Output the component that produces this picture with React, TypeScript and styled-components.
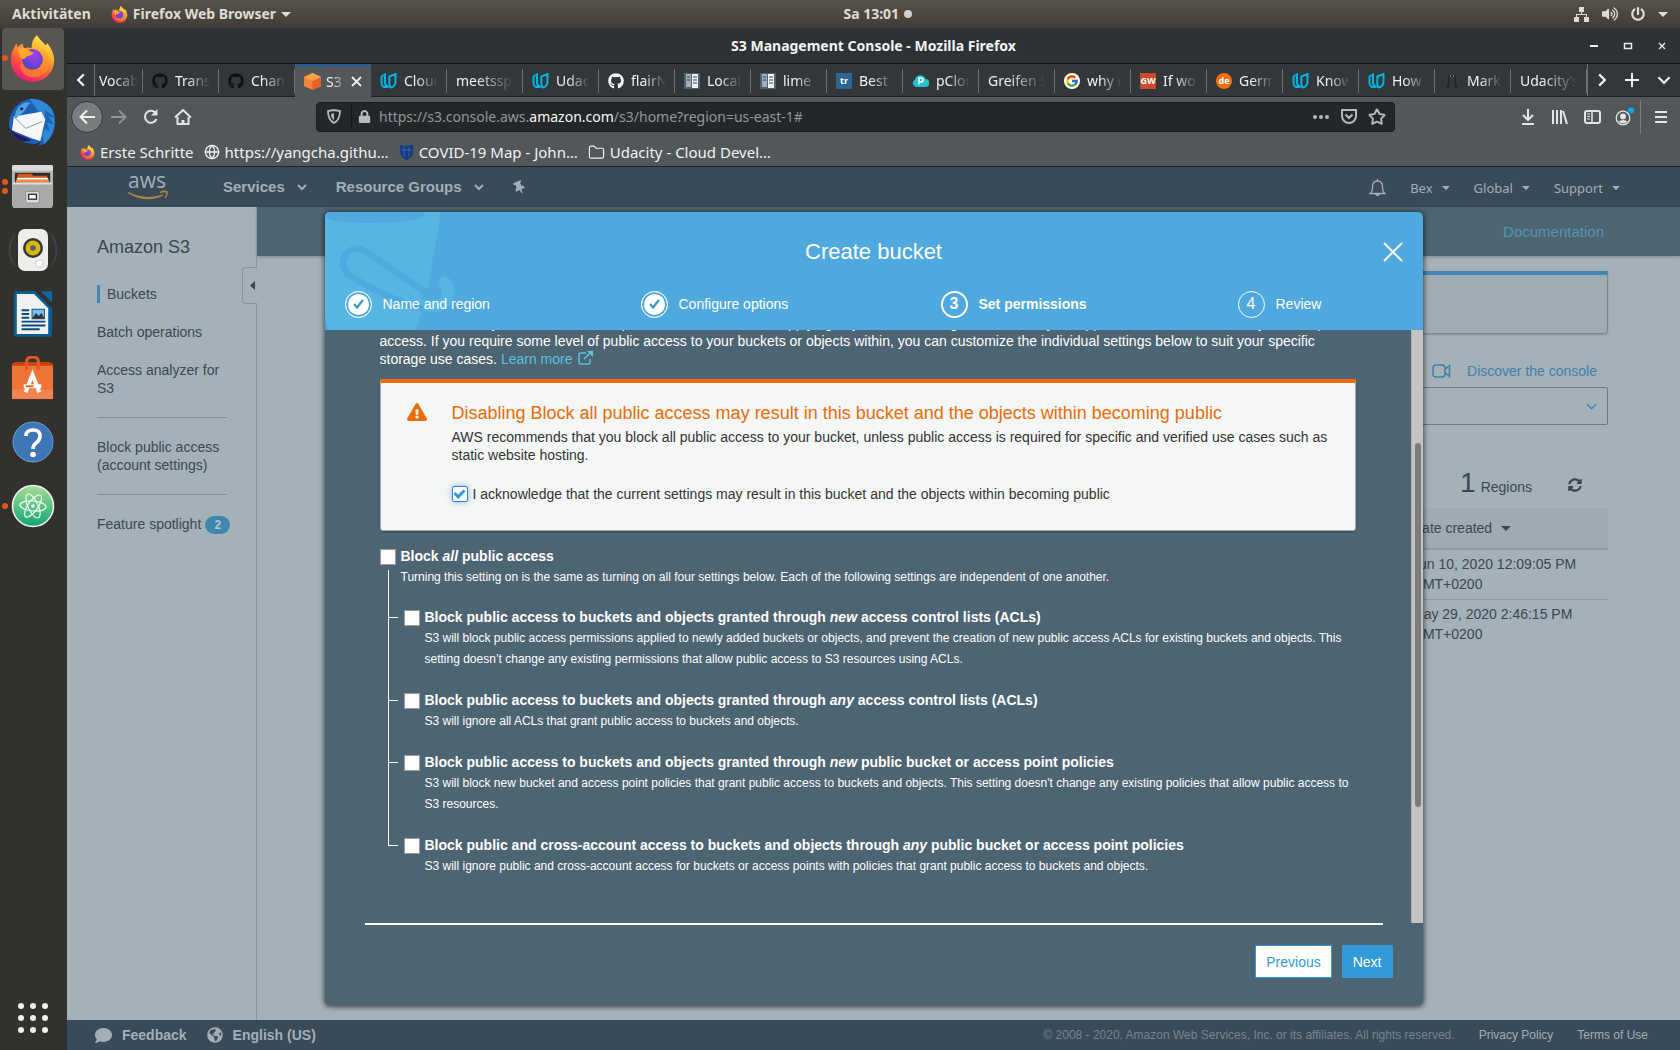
import React from "react";
import styled, { createGlobalStyle, css } from "styled-components";
import {
  FaGithub,
  FaThumbtack,
  FaComment,
  FaGlobeAmericas,
  FaExclamationTriangle,
  FaSyncAlt,
  FaVolumeUp,
  FaPowerOff,
  FaLock,
} from "react-icons/fa";
import { FcGoogle } from "react-icons/fc";
import { Globe, Star, Folder } from "lucide-react";

const ui = '"Noto Sans", "Open Sans", sans-serif';
const sans = '"Liberation Sans", Arial, sans-serif';

const Global = createGlobalStyle`
  * { box-sizing: border-box; }
  html, body, #root { height: 100%; }
  body { margin: 0; font-family: ${sans}; font-size: 14px; line-height: 18px; }
  button { font: inherit; color: inherit; background: none; border: 0; padding: 0; margin: 0; }
  h1, h2, h3, p, ul, ol { margin: 0; padding: 0; font-weight: normal; list-style: none; }
  a { text-decoration: none; color: inherit; }
  svg { display: block; flex: none; }
`;

/* ---------- Desktop ---------- */

const Desktop = styled.div`
  height: 100vh;
  display: flex;
  flex-direction: column;
  overflow: hidden;
`;

const TopBar = styled.header`
  flex: none;
  height: 28px;
  display: grid;
  grid-template-columns: 11fr auto 10fr;
  align-items: center;
  padding: 0 12px;
  background: linear-gradient(#57534a, #3f3d37);
  color: #dfdbd2;
  font: bold 14px/26px ${ui};
`;

const TopGroup = styled.div<{ $end?: boolean }>`
  display: flex;
  align-items: center;
  gap: ${(p) => (p.$end ? 13 : 20)}px;
  justify-content: ${(p) => (p.$end ? "flex-end" : "flex-start")};
`;

const TopButton = styled.button`
  display: flex;
  align-items: center;
  gap: 5px;
`;

const Caret = styled.span<{ $size?: number }>`
  width: 0;
  border: ${(p) => p.$size || 4}px solid transparent;
  border-top-color: currentColor;
  border-bottom: 0;
`;

const ClockDot = styled.span`
  width: 8px;
  height: 8px;
  border-radius: 50%;
  background: #d5d1c8;
`;

const Workspace = styled.div`
  flex: 1;
  min-height: 0;
  display: flex;
`;

const Dock = styled.nav`
  flex: none;
  width: 67px;
  display: flex;
  flex-direction: column;
  background: #33312d;
  padding-right: 2px;
`;

const DockItem = styled.button<{ $active?: boolean }>`
  position: relative;
  height: 64px;
  display: grid;
  place-items: center;
  padding-bottom: 4px;
  &::before {
    content: "";
    position: absolute;
    inset: 0 1px 2px 2px;
    border-radius: 4px;
    background: ${(p) => (p.$active ? "#585650" : "transparent")};
  }
  svg { position: relative; }
`;

const Pips = styled.span`
  position: absolute;
  left: 2px;
  top: 0;
  bottom: 4px;
  display: flex;
  flex-direction: column;
  justify-content: center;
  gap: 3px;
`;

const Pip = styled.i`
  width: 6px;
  height: 6px;
  border-radius: 50%;
  background: #e95420;
`;

const AppsButton = styled.button`
  margin: auto auto 17px;
  display: grid;
  grid-template-columns: repeat(3, 6px);
  gap: 6px;
  i { height: 6px; border-radius: 50%; background: #f2f1ef; }
`;

/* ---------- Browser chrome ---------- */

const Browser = styled.div`
  flex: 1;
  min-width: 0;
  display: flex;
  flex-direction: column;
`;

const TitleBar = styled.div`
  flex: none;
  height: 36px;
  display: grid;
  grid-template-columns: 1fr auto 1fr;
  align-items: center;
  padding: 0 12px;
  background: #2d3234;
  border-bottom: 1px solid #101213;
  color: #f2f3f3;
  font: bold 14px/20px ${ui};
`;

const WindowControls = styled.div`
  justify-self: end;
  display: flex;
  gap: 22px;
  color: #eee;
`;

const TabStrip = styled.div`
  flex: none;
  height: 33px;
  display: flex;
  background: #32373a;
  border-bottom: 1px solid #1d2021;
  color: #f0f1f1;
`;

const StripButton = styled.button<{ $w: number }>`
  width: ${(p) => p.$w}px;
  display: grid;
  place-items: center;
`;

const Tabs = styled.div`
  flex: 1;
  min-width: 0;
  display: flex;
  border: solid #6b7073;
  border-width: 0 1px;
`;

const Tab = styled.button<{ $active?: boolean; $cut?: boolean }>`
  flex: ${(p) => (p.$cut ? "0 0 48px" : "1 1 0")};
  min-width: 0;
  position: relative;
  display: flex;
  align-items: center;
  gap: ${(p) => (p.$active ? 5 : 7)}px;
  padding: 2px ${(p) => (p.$cut ? 4 : 9)}px 0 ${(p) => (p.$cut ? 4 : 9)}px;
  font: 14px/20px ${ui};
  text-align: left;
  &::after {
    content: "";
    position: absolute;
    right: 0;
    top: 5px;
    bottom: 3px;
    width: 1px;
    background: #6b7073;
  }
  ${(p) =>
    p.$active &&
    css`
      background: #525759;
      border-top: 2px solid #215d9c;
      padding-top: 0;
      height: 33px;
      &::after { display: none; }
    `}
`;

const TabLabel = styled.span`
  flex: 1;
  min-width: 0;
  overflow: hidden;
  white-space: nowrap;
  mask-image: linear-gradient(to right, #000 35%, transparent 100%);
`;

const Square = styled.span<{ $bg: string; $round?: boolean }>`
  flex: none;
  width: 16px;
  height: 16px;
  display: grid;
  place-items: center;
  border-radius: ${(p) => (p.$round ? "50%" : "0")};
  background: ${(p) => p.$bg};
  color: #fff;
  font: bold 9px/16px ${ui};
`;

const Toolbar = styled.div`
  flex: none;
  height: 41px;
  display: flex;
  align-items: center;
  padding: 0 11px 2px 4px;
  background: #525759;
  color: #e3e4e4;
`;

const ToolButton = styled.button<{ $round?: boolean; $dim?: boolean }>`
  width: 32px;
  height: 32px;
  display: grid;
  place-items: center;
  color: ${(p) => (p.$dim ? "#8f9394" : "inherit")};
  ${(p) =>
    p.$round &&
    css`
      border-radius: 50%;
      background: #787c7d;
      border: 1px solid #34383a;
    `}
`;

const UrlBox = styled.div`
  flex: 1;
  margin: 0 117px;
  height: 30px;
  display: flex;
  align-items: center;
  gap: 6px;
  padding: 0 6px;
  border: 1px solid #1b1e20;
  border-radius: 4px;
  background: #232729;
  color: #b6b8b9;
`;

const UrlText = styled.a`
  flex: 1;
  font: 14px/20px ${ui};
  color: #939698;
  padding-left: 2px;
  b { font-weight: normal; color: #f5f5f5; }
`;

const UrlButton = styled.button`
  width: 22px;
  display: grid;
  place-items: center;
`;

const Rule = styled.span<{ $h: number; $c: string }>`
  flex: none;
  width: 1px;
  height: ${(p) => p.$h}px;
  background: ${(p) => p.$c};
`;

const Bookmarks = styled.nav`
  flex: none;
  height: 29px;
  display: flex;
  align-items: center;
  gap: 10px;
  padding: 0 13px;
  background: #525759;
  border-bottom: 1px solid #1f2325;
  color: #f0f1f1;
  font: 15px/20px ${ui};
`;

const Bookmark = styled.a`
  display: flex;
  align-items: center;
  gap: 5px;
`;

/* ---------- AWS console ---------- */

const Page = styled.div`
  flex: 1;
  min-height: 0;
  position: relative;
  display: flex;
  flex-direction: column;
  background: #a4b1b9;
  color: #3b474f;
`;

const ConsoleBar = styled.header`
  flex: none;
  height: 40px;
  display: flex;
  align-items: center;
  padding: 0 60px;
  background: #394a59;
  color: #a3afb7;
  font-weight: bold;
  font-size: 15px;
`;

const Logo = styled.a`
  margin-right: 54px;
`;

const ConsoleItem = styled.button`
  display: flex;
  align-items: center;
  gap: 12px;
  margin-right: 29px;
`;

const Pin = styled.span`
  display: block;
  transform: rotate(-25deg);
`;

const AccountMenus = styled.div`
  margin-left: auto;
  display: flex;
  align-items: center;
  gap: 24px;
  padding-top: 2px;
  font: 13px/18px ${ui};
`;

const AccountItem = styled.button`
  display: flex;
  align-items: center;
  gap: 9px;
`;

const Console = styled.div`
  flex: 1;
  min-height: 0;
  display: flex;
`;

const Sidebar = styled.aside`
  position: relative;
  flex: none;
  width: 190px;
  padding: 29px 29px 0 30px;
  border-right: 1px solid #88959d;
`;

const SideTitle = styled.h2`
  font-size: 18px;
  line-height: 22px;
  margin-bottom: 27px;
`;

const SideList = styled.ul`
  display: flex;
  flex-direction: column;
  gap: 20px;
`;

const SideLink = styled.a<{ $current?: boolean }>`
  display: block;
  white-space: nowrap;
  ${(p) => p.$current && "border-left: 3px solid #3f86b0; padding-left: 7px;"}
`;

const SideRule = styled.li`
  height: 1px;
  background: #83909a;
`;

const Badge = styled.span`
  display: inline-block;
  width: 25px;
  margin-left: 4px;
  border-radius: 9px;
  background: #3f86b0;
  color: #b9c6ce;
  font-size: 12px;
  font-weight: bold;
  text-align: center;
`;

const Collapse = styled.button`
  position: absolute;
  right: -1px;
  top: 60px;
  width: 15px;
  height: 37px;
  display: grid;
  place-items: center end;
  padding-right: 2px;
  border: 1px solid #88959d;
  border-right: 0;
  border-radius: 4px 0 0 4px;
  background: #a4b1b9;
`;

const Main = styled.main`
  flex: 1;
  min-width: 0;
`;

const Band = styled.div`
  height: 49px;
  display: flex;
  align-items: center;
  justify-content: flex-end;
  padding: 0 76px;
  background: #4d6472;
  color: #5896b0;
  font-size: 15px;
  box-shadow: 0 1px 3px #00000040;
`;

const MainBody = styled.div`
  padding: 15px 72px 0;
`;

const InfoCard = styled.section`
  height: 63px;
  border: 1px solid #7b8890;
  border-top: 4px solid #3f86b0;
  border-radius: 0 0 4px 4px;
  background: #a0acb3;
  box-shadow: 0 1px 2px #00000030;
`;

const Discover = styled.a`
  display: flex;
  align-items: center;
  justify-content: flex-end;
  gap: 16px;
  margin: 28px 11px 7px;
  color: #3f81a8;
`;

const SearchRow = styled.button`
  width: 100%;
  height: 38px;
  display: flex;
  align-items: center;
  justify-content: flex-end;
  padding: 0 10px;
  border: 1px solid #6c7a83;
  border-radius: 2px;
  color: #3f81a8;
`;

const Summary = styled.div`
  height: 83px;
  display: flex;
  align-items: baseline;
  justify-content: flex-end;
  gap: 5px;
  padding: 43px 26px 0;
`;

const Count = styled.strong`
  font-weight: normal;
  font-size: 28px;
  line-height: 30px;
`;

const Refresh = styled.button`
  margin-left: 31px;
`;

const BucketTable = styled.table`
  width: 100%;
  table-layout: fixed;
  border-collapse: collapse;
  line-height: 20px;
  text-align: left;
  th { height: 41px; font-weight: normal; padding: 0; background: #9fabb2; border-bottom: 2px solid #8b989f; }
  td { padding: 4px 0 5px; vertical-align: top; border-bottom: 1px solid #8b989f; }
  tr:last-child td { border-bottom: 0; }
  th:last-child { width: 196px; }
`;

const SortLabel = styled.span`
  display: flex;
  align-items: center;
  gap: 9px;
`;

const Footer = styled.footer`
  flex: none;
  height: 30px;
  display: flex;
  align-items: center;
  padding: 0 32px 0 28px;
  background: #394a59;
  color: #a3afb7;
`;

const FooterItem = styled.button`
  display: flex;
  align-items: center;
  gap: 10px;
  margin-right: 20px;
  font-weight: bold;
`;

const Legal = styled.div`
  margin-left: auto;
  display: flex;
  gap: 24px;
  font-size: 12px;
  span { color: #778690; }
`;

/* ---------- Dialog ---------- */

const Overlay = styled.div`
  position: absolute;
  inset: 0;
  display: flex;
  justify-content: center;
  padding: 45px 24px;
`;

const Dialog = styled.section`
  width: 100%;
  max-width: 1098px;
  display: flex;
  flex-direction: column;
  border-radius: 5px;
  overflow: hidden;
  background: #4d6472;
  color: #fff;
  box-shadow: 0 1px 5px 1px #0009;
`;

const DialogHead = styled.header`
  position: relative;
  flex: none;
  padding: 26px 20px 12px;
  background: #4fa9de;
`;

const BucketArt = styled.svg`
  position: absolute;
  left: 0;
  top: 0;
`;

const TitleRow = styled.div`
  position: relative;
  display: grid;
  grid-template-columns: 1fr auto 1fr;
  align-items: center;
  height: 28px;
  margin-bottom: 24px;
`;

const DialogTitle = styled.h1`
  grid-column: 2;
  font-size: 22px;
  line-height: 28px;
`;

const Close = styled.button`
  justify-self: end;
`;

const Steps = styled.ol`
  position: relative;
  display: grid;
  grid-template-columns: 296fr 300fr 297fr 165fr;
`;

const Step = styled.li<{ $current?: boolean }>`
  display: flex;
  align-items: center;
  gap: 11px;
  height: 28px;
  font-weight: ${(p) => (p.$current ? "bold" : "normal")};
`;

const Bullet = styled.span<{ $state: "done" | "current" | "next" }>`
  width: 27px;
  height: 27px;
  display: grid;
  place-items: center;
  border: ${(p) => (p.$state === "current" ? 2 : 1)}px solid #fff;
  border-radius: 50%;
  font-size: 16px;
  ${(p) => p.$state === "done" && "background: #fff; box-shadow: inset 0 0 0 2px #4fa9de;"}
`;

const Pane = styled.div`
  flex: 1;
  min-height: 0;
  display: flex;
`;

const Content = styled.div`
  flex: 1;
  display: flex;
  flex-direction: column;
  justify-content: flex-end;
  overflow: hidden;
  padding: 0 55px 46px;
`;

const Track = styled.div`
  flex: none;
  width: 12px;
  padding: 113px 3px 0;
  background: #c3c4c3;
  border-left: 1px solid #b0b2b1;
`;

const Thumb = styled.div`
  height: 364px;
  width: 6px;
  border-radius: 3px;
  background: #7b7d7c;
`;

const LearnMore = styled.a`
  color: #56c3e0;
  svg { display: inline-block; vertical-align: -1px; margin-left: 2px; }
`;

const Alert = styled.section`
  display: flex;
  gap: 25px;
  margin: 11px 0 15px;
  padding: 19px 24px 27px 26px;
  border: 1px solid #a9adac;
  border-top: 4px solid #eb6b07;
  border-radius: 0 0 3px 3px;
  background: #f5f7f6;
  color: #333;
  box-shadow: 0 1px 2px #0004;
`;

const AlertIcon = styled.span`
  color: #eb6b07;
`;

const AlertTitle = styled.h3`
  margin-bottom: 4px;
  color: #eb6b07;
  font-size: 18px;
  line-height: 22px;
`;

const CheckLabel = styled.label<{ $strong?: boolean }>`
  display: flex;
  align-items: center;
  gap: 5px;
  line-height: ${(p) => (p.$strong ? 21 : 18)}px;
  font-weight: ${(p) => (p.$strong ? "bold" : "normal")};
`;

const AckRow = styled.div`
  margin-top: 21px;
`;

const Box = styled.input`
  appearance: none;
  flex: none;
  width: 16px;
  height: 16px;
  margin: 0;
  display: grid;
  place-items: center;
  border: 1px solid #989b9b;
  background: #fff;
  &:checked {
    border-color: #2f83dc;
    border-radius: 2px;
    box-shadow: 0 0 6px #2f83dc90;
  }
  &:checked::before {
    content: "";
    width: 12px;
    height: 12px;
    background: #2e97d8;
    clip-path: polygon(0 52%, 16% 34%, 38% 56%, 84% 12%, 100% 28%, 40% 92%);
  }
`;

const Note = styled.p`
  padding-left: 21px;
  font-size: 12px;
  line-height: 21px;
`;

const Tree = styled.ul`
  margin: 19px 0 0 24px;
  display: flex;
  flex-direction: column;
  gap: 20px;
`;

const Branch = styled.li`
  position: relative;
  &::before {
    content: "";
    position: absolute;
    left: -16px;
    top: 0;
    bottom: -20px;
    border-left: 1px solid #fff;
  }
  &::after {
    content: "";
    position: absolute;
    left: -16px;
    top: 10px;
    width: 10px;
    border-top: 1px solid #fff;
  }
  &:first-child::before { top: -37px; }
  &:last-child::before { bottom: auto; height: 11px; }
`;

const DialogFoot = styled.footer`
  flex: none;
  hr { height: 2px; margin: 0 40px; border: 0; background: #fff; }
`;

const Actions = styled.div`
  display: flex;
  justify-content: flex-end;
  gap: 10px;
  padding: 20px 30px 27px;
`;

const Action = styled.button<{ $primary?: boolean }>`
  height: 33px;
  padding: 0 10px;
  border: 1px solid #329ad9;
  background: ${(p) => (p.$primary ? "#329ad9" : "#fff")};
  color: ${(p) => (p.$primary ? "#fff" : "#329ad9")};
`;

/* ---------- Drawings ---------- */

const Chevron = ({ d = "down", s = 10, w = 2 }: { d?: "down" | "left" | "right"; s?: number; w?: number }) => (
  <svg width={s} height={s} viewBox="0 0 10 10" fill="none" stroke="currentColor" strokeWidth={w}>
    <path d={{ down: "M1 3l4 4 4-4", left: "M7 1L3 5l4 4", right: "M3 1l4 4-4 4" }[d]} />
  </svg>
);

const FirefoxIcon = ({ s }: { s: number }) => {
  const id = "fx" + s;
  return (
    <svg width={s} height={s} viewBox="0 0 46 50">
      <defs>
        <linearGradient id={id} x1=".8" y1="0" x2=".3" y2="1">
          <stop offset="0" stopColor="#fff44f" />
          <stop offset=".35" stopColor="#ffb02e" />
          <stop offset=".65" stopColor="#ff5a36" />
          <stop offset="1" stopColor="#e5157a" />
        </linearGradient>
        <radialGradient id={id + "p"} cx=".6" cy=".3" r=".8">
          <stop offset="0" stopColor="#a03ff5" />
          <stop offset="1" stopColor="#4a46b8" />
        </radialGradient>
      </defs>
      <path d="M28 0c2 5 6 7 9 11 2-1 1-3 1-3 5 6 8 12 8 19a23 23 0 0 1-46 0C0 19 3 13 6 9l1 4 5-4 2 5c3-1 6-1 8 0 0-6 2-11 6-14z" fill={`url(#${id})`} />
      <circle cx="23" cy="26" r="11" fill={`url(#${id}p)`} />
      <path d="M7 15c5-3 10-1 13 2l4 2c-1 3-6 3-8 5-1 2-4 2-6 0z" fill="#ffa62b" />
      <path d="M27 16c6 0 9 5 8 10-1 6-5 11-13 11-6 0-10-4-11-9-3 9 3 17 13 17 11 0 18-8 17-18-1-8-7-13-14-11z" fill="#ff9a2c" opacity=".55" />
    </svg>
  );
};

const Thunderbird = () => (
  <svg width="49" height="49" viewBox="0 0 50 50">
    <path d="M12 5C20-2 38 0 45 12c6 12 3 27-8 35l-6 2 3-5-6 3C12 46 2 40 1 27 1 18 5 10 12 5z" fill="#1c5fb8" />
    <path d="M22 1c10-1 20 5 24 13 4 12 0 25-9 33l-2-9 3-8-5-14z" fill="#2d8ad6" />
    <path d="M38 12l10 8-7-1 6 8-7-2 3 9-6-3" fill="#1b64b8" />
    <path d="M6 19l28-5 4 8-5 22-9-3-20-8z" fill="#f4f5f7" />
    <path d="M6 19l12 12 17-7" fill="none" stroke="#8d97a4" strokeWidth="1" />
    <path d="M7 20c0-10 8-18 17-15-5 1-4 6-9 10l-7 6z" fill="#4fa3e0" />
    <circle cx="14" cy="11" r="1.6" fill="#123" />
    <path d="M2 31c3 4 8 6 13 8l9 4c-8 4-19-1-22-12z" fill="#261a5c" />
  </svg>
);

const FilesIcon = () => (
  <svg width="43" height="45" viewBox="0 0 44 46">
    <rect x="1" y="1" width="42" height="43" rx="2" fill="#b5b5b5" />
    <rect x="1" y="1" width="42" height="6" rx="2" fill="#dcdcdc" />
    <rect x="4" y="9" width="36" height="12" fill="#2b2b2b" />
    <path d="M7 10h14l2 2h14v6H6z" fill="#d5571d" />
    <path d="M6 14h32v2H6z" fill="#fff" />
    <path d="M5 16h34v4H5z" fill="#f0883a" />
    <rect x="2" y="19" width="40" height="26" rx="1" fill="#a9a9a9" />
    <rect x="2" y="19" width="40" height="2" fill="#dedede" />
    <rect x="15" y="28" width="14" height="12" rx="2" fill="#dcdcdc" stroke="#8c8c8c" />
    <rect x="18" y="31" width="8" height="5" fill="#fff" stroke="#333" strokeWidth="1.4" />
  </svg>
);

const SpeakerIcon = () => (
  <svg width="50" height="46" viewBox="0 0 50 46">
    <g fill="none" stroke="#3c4a5c" strokeWidth="1.2">
      <path d="M7 7C0 17 0 29 7 39M43 7c7 10 7 22 0 32" />
      <path d="M4 11c-4 8-4 16 0 24M46 11c4 8 4 16 0 24" opacity=".6" />
    </g>
    <rect x="10" y="2" width="30" height="42" rx="7" fill="#ededeb" />
    <circle cx="25" cy="21" r="10" fill="#33373b" />
    <circle cx="25" cy="21" r="7.5" fill="#d9b60c" />
    <circle cx="25" cy="21" r="2.8" fill="#5b5f63" />
    <rect x="28" y="33" width="7" height="7" rx="2" fill="#fff" stroke="#cfcfcf" />
  </svg>
);

const WriterIcon = () => (
  <svg width="40" height="48" viewBox="0 0 42 50">
    <path d="M3 1h20l18 18v27a3 3 0 0 1-3 3H4a3 3 0 0 1-3-3V3a2 2 0 0 1 2-2z" fill="#0a5d92" />
    <path d="M4 4h18l15 15v27H4z" fill="#f1f1f1" />
    <path d="M29 1h11a1 1 0 0 1 1 1v11z" fill="#0a69a3" />
    <path d="M9 20h8v2H9zM9 24h8v2H9zM9 28h8v2H9zM9 32h25v2H9zM9 36h25v2H9zM9 40h19v2H9z" fill="#0a4d7c" />
    <rect x="20" y="20" width="13" height="10" fill="#78bfe8" stroke="#0a4d7c" />
    <path d="M20 30l4-6 3 3 3-3 3 6z" fill="#333" />
  </svg>
);

const StoreIcon = () => (
  <svg width="43" height="45" viewBox="0 0 44 46">
    <path d="M1 8l4-2h34l4 2v5H1z" fill="#c9430e" />
    <rect x="1" y="10" width="42" height="34" fill="#ee7437" />
    <rect x="1" y="34" width="42" height="10" fill="#f2854f" />
    <path d="M16 14V6q0-5 6-5t6 5v8" fill="none" stroke="#e25a22" strokeWidth="3" />
    <path d="M15 37l7-18 7 18M13 31h18" fill="none" stroke="#fff" strokeWidth="4" />
    <path d="M15 31h8" stroke="#e8622a" strokeWidth="2" />
  </svg>
);

const HelpIcon = () => (
  <svg width="42" height="42" viewBox="0 0 42 42">
    <circle cx="21" cy="21" r="20" fill="#3c76b4" stroke="#6f9fd2" />
    <path d="M14 15q0-6 7-6t7 6q0 4-4 7-3 2-3 6" fill="none" stroke="#fff" strokeWidth="3.6" />
    <circle cx="21" cy="33.5" r="2.8" fill="#fff" />
  </svg>
);

const AtomIcon = () => (
  <svg width="44" height="44" viewBox="0 0 44 44">
    <defs>
      <linearGradient id="atom" x1="0" y1="0" x2="0" y2="1">
        <stop offset="0" stopColor="#a5de94" />
        <stop offset="1" stopColor="#12a673" />
      </linearGradient>
    </defs>
    <circle cx="22" cy="22" r="20.5" fill="url(#atom)" stroke="#f2f4f2" strokeWidth="1.5" />
    <g fill="none" stroke="#f4fff4" strokeWidth="1.2">
      <ellipse cx="22" cy="22" rx="13" ry="5" transform="rotate(5 22 22)" />
      <ellipse cx="22" cy="22" rx="13" ry="5" transform="rotate(65 22 22)" />
      <ellipse cx="22" cy="22" rx="13" ry="5" transform="rotate(125 22 22)" />
    </g>
    <circle cx="22" cy="22" r="1.8" fill="#fff" />
  </svg>
);

const UdacityIcon = () => (
  <svg width="17" height="16" viewBox="0 0 17 16" fill="none" stroke="#02b3e4" strokeWidth="2">
    <path d="M1.500 3.500L5 1.500v8q0 3 2.800 4.200Q1.500 15.500 1.500 9.500z" />
    <path d="M9.300 3.500L15.500 1v7.500q0 5-4.700 6-1.500-.8-1.500-3.500z" />
  </svg>
);

const CubeIcon = () => (
  <svg width="17" height="17" viewBox="0 0 17 17">
    <path d="M8.500 0L17 4v9l-8.500 4L0 13V4z" fill="#f58536" />
    <path d="M8.500 0L17 4 8.500 8 0 4z" fill="#f9a14a" />
    <path d="M8.500 8L17 4v9l-8.500 4z" fill="#e8602b" />
  </svg>
);

const ServerIcon = () => (
  <svg width="16" height="16" viewBox="0 0 16 16">
    <rect width="16" height="16" fill="#51626f" />
    <rect x="2" y="1" width="5" height="13" fill="#9fb0bc" />
    <rect x="8" y="1" width="6" height="14" fill="#f0f3f5" />
    <path d="M9 4h4M9 7h4M9 10h4M3 4h3M3 7h3" stroke="#333f48" />
  </svg>
);

const CloudIcon = () => (
  <svg width="17" height="16" viewBox="0 0 17 16">
    <path d="M4 14a4 4 0 0 1-1-7.500A5.500 5.500 0 0 1 13.600 6 4 4 0 0 1 13 14z" fill="#20c3cf" />
    <path d="M7 11.500V5h2a2 2 0 0 1 0 4H7" fill="none" stroke="#fff" strokeWidth="1.500" />
  </svg>
);

const FigureIcon = () => (
  <svg width="16" height="16" viewBox="0 0 16 16" fill="none" stroke="#24282a" strokeWidth="2">
    <path d="M5 3h6v5l1 6h2M5 3v5l-1 6H2" />
    <path d="M6 3h1M9 3h1" stroke="#ddd" strokeWidth="1" />
  </svg>
);

const github = (c: string) => <FaGithub size={16} color={c} />;

const tabs: { label: string; icon?: React.ReactNode; active?: boolean; cut?: boolean }[] = [
  { label: "Vocab", cut: true },
  { label: "Transf", icon: github("#14100f") },
  { label: "Chang", icon: github("#14100f") },
  { label: "S3", icon: <CubeIcon />, active: true },
  { label: "Cloud", icon: <UdacityIcon /> },
  { label: "meetsspa" },
  { label: "Udaci", icon: <UdacityIcon /> },
  { label: "flairNL", icon: github("#fff") },
  { label: "Local", icon: <ServerIcon /> },
  { label: "lime", icon: <ServerIcon /> },
  { label: "Best", icon: <Square $bg="#2d6590">tr</Square> },
  { label: "pCloud", icon: <CloudIcon /> },
  { label: "Greifen S" },
  { label: "why n", icon: <Square $bg="#fff" $round><FcGoogle size={14} /></Square> },
  { label: "If wo", icon: <Square $bg="#ca4a2c">GW</Square> },
  { label: "Germ", icon: <Square $bg="#f96e05" $round>de</Square> },
  { label: "Know", icon: <UdacityIcon /> },
  { label: "How", icon: <UdacityIcon /> },
  { label: "Mark", icon: <FigureIcon /> },
  { label: "Udacity’s" },
];

const dock = [
  { name: "Firefox", icon: <FirefoxIcon s={47} />, pips: 1, active: true },
  { name: "Thunderbird", icon: <Thunderbird />, pips: 0 },
  { name: "Files", icon: <FilesIcon />, pips: 2 },
  { name: "Rhythmbox", icon: <SpeakerIcon />, pips: 0 },
  { name: "Writer", icon: <WriterIcon />, pips: 0 },
  { name: "Software", icon: <StoreIcon />, pips: 0 },
  { name: "Help", icon: <HelpIcon />, pips: 0 },
  { name: "Atom", icon: <AtomIcon />, pips: 1 },
];

const settings = [
  {
    id: "new-acl",
    title: <>Block public access to buckets and objects granted through <em>new</em> access control lists (ACLs)</>,
    note: "S3 will block public access permissions applied to newly added buckets or objects, and prevent the creation of new public access ACLs for existing buckets and objects. This setting doesn’t change any existing permissions that allow public access to S3 resources using ACLs.",
  },
  {
    id: "any-acl",
    title: <>Block public access to buckets and objects granted through <em>any</em> access control lists (ACLs)</>,
    note: "S3 will ignore all ACLs that grant public access to buckets and objects.",
  },
  {
    id: "new-policy",
    title: <>Block public access to buckets and objects granted through <em>new</em> public bucket or access point policies</>,
    note: "S3 will block new bucket and access point policies that grant public access to buckets and objects. This setting doesn't change any existing policies that allow public access to S3 resources.",
  },
  {
    id: "any-policy",
    title: <>Block public and cross-account access to buckets and objects through <em>any</em> public bucket or access point policies</>,
    note: "S3 will ignore public and cross-account access for buckets or access points with policies that grant public access to buckets and objects.",
  },
];

const steps: { label: string; state: "done" | "current" | "next" }[] = [
  { label: "Name and region", state: "done" },
  { label: "Configure options", state: "done" },
  { label: "Set permissions", state: "current" },
  { label: "Review", state: "next" },
];

/* ---------- Sections ---------- */

const DesktopBar = () => (
  <TopBar>
    <TopGroup>
      <TopButton>Aktivitäten</TopButton>
      <TopButton>
        <FirefoxIcon s={17} />
        Firefox Web Browser
        <Caret $size={5} />
      </TopButton>
    </TopGroup>
    <TopButton>
      Sa 13:01
      <ClockDot />
    </TopButton>
    <TopGroup $end>
      <svg width="15" height="15" viewBox="0 0 15 15" fill="#dfdbd2">
        <path d="M5 0h5v5H8v2h5v3h2v5h-5v-5h2V8H3v2h2v5H0v-5h2V7h5V5H5z" />
      </svg>
      <FaVolumeUp size={16} />
      <FaPowerOff size={14} />
      <Caret $size={5} />
    </TopGroup>
  </TopBar>
);

const Chrome = () => (
  <>
    <TitleBar>
      <span />
      <span>S3 Management Console - Mozilla Firefox</span>
      <WindowControls>
        <button aria-label="Minimise"><svg width="12" height="10" viewBox="0 0 12 10"><path d="M2 5h8" stroke="currentColor" strokeWidth="2" /></svg></button>
        <button aria-label="Maximise"><svg width="12" height="10" viewBox="0 0 12 10"><path d="M2.500 2.500h7v5h-7z" fill="none" stroke="currentColor" strokeWidth="1.500" /></svg></button>
        <button aria-label="Close window"><svg width="12" height="10" viewBox="0 0 12 10"><path d="M3 2l6 6M9 2L3 8" stroke="currentColor" strokeWidth="1.300" /></svg></button>
      </WindowControls>
    </TitleBar>
    <TabStrip>
      <StripButton $w={27} aria-label="Scroll tabs left"><Chevron d="left" s={14} w={1.6} /></StripButton>
      <Tabs>
        {tabs.map((t, i) => (
          <Tab key={i} $active={t.active} $cut={t.cut}>
            {t.icon}
            <TabLabel>{t.label}</TabLabel>
            {t.active && (
              <svg width="11" height="11" viewBox="0 0 11 11"><path d="M1 1l9 9M10 1l-9 9" stroke="#eee" strokeWidth="1.800" /></svg>
            )}
          </Tab>
        ))}
      </Tabs>
      <StripButton $w={28} aria-label="Scroll tabs right"><Chevron d="right" s={14} w={1.6} /></StripButton>
      <StripButton $w={32} aria-label="New tab"><svg width="14" height="14" viewBox="0 0 14 14"><path d="M7 0v14M0 7h14" stroke="currentColor" strokeWidth="2" /></svg></StripButton>
      <StripButton $w={32} aria-label="List all tabs"><Chevron s={14} w={1.6} /></StripButton>
    </TabStrip>
    <Toolbar>
      <ToolButton $round aria-label="Back"><svg width="16" height="16" viewBox="0 0 16 16" fill="none" stroke="#eee" strokeWidth="2"><path d="M16 8H1.500M8 1.500L1.500 8 8 14.500" /></svg></ToolButton>
      <ToolButton $dim aria-label="Forward"><svg width="16" height="16" viewBox="0 0 16 16" fill="none" stroke="currentColor" strokeWidth="2"><path d="M0 8h14.500M8 1.500L14.500 8 8 14.500" /></svg></ToolButton>
      <ToolButton aria-label="Reload"><svg width="16" height="16" viewBox="0 0 16 16" fill="none" stroke="currentColor" strokeWidth="2"><path d="M13 4.500A6 6 0 1 0 13.500 10" /><path d="M14.500 0v6.500H8z" fill="currentColor" stroke="none" /></svg></ToolButton>
      <ToolButton aria-label="Home"><svg width="18" height="16" viewBox="0 0 18 16" fill="none" stroke="currentColor" strokeWidth="2"><path d="M1 8.500L9 1l8 7.500M3.500 8v7h11V8" /><path d="M9 15v-4" strokeWidth="3" /></svg></ToolButton>
      <UrlBox>
        <UrlButton aria-label="Tracking protection"><svg width="14" height="15" viewBox="0 0 14 15" fill="none" stroke="currentColor" strokeWidth="1.800"><path d="M1 2l6-1 6 1q0 9-6 12Q1 11 1 2z" /><path d="M7 4v7q-3-2-3-6z" fill="currentColor" stroke="none" /></svg></UrlButton>
        <Rule $h={24} $c="#15181a" />
        <FaLock size={13} />
        <UrlText href="#">https://s3.console.aws.<b>amazon.com</b>/s3/home?region=us-east-1#</UrlText>
        <UrlButton aria-label="Page actions"><svg width="16" height="4" viewBox="0 0 16 4" fill="currentColor"><circle cx="2" cy="2" r="2" /><circle cx="8" cy="2" r="2" /><circle cx="14" cy="2" r="2" /></svg></UrlButton>
        <UrlButton aria-label="Save to Pocket"><svg width="16" height="15" viewBox="0 0 16 15" fill="none" stroke="currentColor" strokeWidth="2"><path d="M1 1h14v6a7 7 0 0 1-14 0zM4.500 5.500L8 9l3.500-3.500" /></svg></UrlButton>
        <UrlButton aria-label="Bookmark this page"><Star size={18} strokeWidth={2.6} /></UrlButton>
      </UrlBox>
      <ToolButton aria-label="Downloads"><svg width="14" height="16" viewBox="0 0 14 16" fill="none" stroke="currentColor" strokeWidth="2"><path d="M7 0v10M2 6l5 5 5-5M1 15h12" /></svg></ToolButton>
      <ToolButton aria-label="Library"><svg width="16" height="14" viewBox="0 0 16 14" fill="none" stroke="currentColor" strokeWidth="2"><path d="M1 0v14M5 0v14M9 0v14M11 1l4 13" /></svg></ToolButton>
      <ToolButton aria-label="Sidebars"><svg width="17" height="14" viewBox="0 0 17 14" fill="none" stroke="currentColor" strokeWidth="2"><rect x="1" y="1" width="15" height="12" rx="2" /><path d="M8 1v12" strokeWidth="1.500" /><path d="M3 4h3M3 6.500h3M3 9h3" strokeWidth="1.200" /></svg></ToolButton>
      <ToolButton aria-label="Account"><svg width="22" height="20" viewBox="0 0 22 20"><circle cx="10" cy="11" r="6.800" fill="none" stroke="currentColor" strokeWidth="1.300" /><circle cx="10" cy="9.500" r="3" fill="currentColor" /><path d="M5.500 14.500q4.500-3 9 0-4.500 4-9 0z" fill="currentColor" /><circle cx="18" cy="3.500" r="3" fill="#00a8f8" /></svg></ToolButton>
      <Rule $h={34} $c="#777b7d" />
      <MenuSlot>
        <ToolButton aria-label="Menu"><svg width="12" height="14" viewBox="0 0 12 14"><path d="M0 2h12M0 7h12M0 12h12" stroke="currentColor" strokeWidth="2" /></svg></ToolButton>
      </MenuSlot>
    </Toolbar>
    <Bookmarks>
      <Bookmark href="#"><FirefoxIcon s={15} />Erste Schritte</Bookmark>
      <Bookmark href="#"><Globe size={16} />https://yangcha.githu…</Bookmark>
      <Bookmark href="#">
        <svg width="15" height="16" viewBox="0 0 15 16"><path d="M1 1l6 1 7-1v7q0 5-6.500 8Q1 13 1 8z" fill="#123b80" /><path d="M2 6h11M5 3v10M10 3v10" stroke="#4c6da5" strokeWidth=".8" /></svg>
        COVID-19 Map - John…
      </Bookmark>
      <Bookmark href="#"><Folder size={17} strokeWidth={1.6} />Udacity - Cloud Devel…</Bookmark>
    </Bookmarks>
  </>
);

const MenuSlot = styled.div`
  padding-left: 4px;
  margin-right: -8px;
`;

const AwsHeader = () => (
  <ConsoleBar>
    <Logo href="#">
      <svg width="42" height="28" viewBox="0 0 42 28">
        <text x="20" y="15" textAnchor="middle" fontFamily="Open Sans, Noto Sans, sans-serif" fontWeight="500" fontSize="21" fill="#a3afb7">aws</text>
        <path d="M1 19.500q18 11 35 2.500-17 6-35-2.500z" fill="#a98345" stroke="#a98345" strokeWidth="1.200" />
        <path d="M33 19.500q5-2 7-.5.500 3-2 6" fill="none" stroke="#a98345" strokeWidth="1.600" />
      </svg>
    </Logo>
    <ConsoleItem>Services<Chevron s={10} /></ConsoleItem>
    <ConsoleItem>Resource Groups<Chevron s={10} /></ConsoleItem>
    <button aria-label="Pin"><Pin><FaThumbtack size={13} /></Pin></button>
    <AccountMenus>
      <button aria-label="Notifications">
        <svg width="17" height="18" viewBox="0 0 17 18" fill="none" stroke="currentColor" strokeWidth="1.300"><path d="M8.500 2q5 0 5 6 0 5 2.500 6.500H1Q3.500 13 3.500 8q0-6 5-6zM8.500 0v2" /><path d="M6.500 15q2 3 4 0z" fill="currentColor" /></svg>
      </button>
      {["Bex", "Global", "Support"].map((m) => (
        <AccountItem key={m}>{m}<Caret /></AccountItem>
      ))}
    </AccountMenus>
  </ConsoleBar>
);

const SideNav = () => (
  <Sidebar>
    <SideTitle>Amazon S3</SideTitle>
    <SideList>
      <li><SideLink href="#" $current>Buckets</SideLink></li>
      <li><SideLink href="#">Batch operations</SideLink></li>
      <li><SideLink href="#">Access analyzer for<br />S3</SideLink></li>
      <SideRule />
      <li><SideLink href="#">Block public access<br />(account settings)</SideLink></li>
      <SideRule />
      <li><SideLink href="#">Feature spotlight<Badge>2</Badge></SideLink></li>
    </SideList>
    <Collapse aria-label="Collapse navigation">
      <svg width="5" height="9" viewBox="0 0 5 9"><path d="M5 0v9L0 4.500z" fill="#37444c" /></svg>
    </Collapse>
  </Sidebar>
);

const BucketsPage = () => (
  <Main>
    <Band><a href="#">Documentation</a></Band>
    <MainBody>
      <InfoCard />
      <Discover href="#">
        <svg width="19" height="14" viewBox="0 0 19 14" fill="none" stroke="currentColor" strokeWidth="1.500"><rect x="1" y="1" width="12" height="12" rx="3" /><path d="M13 5.500L17.500 1.500v11L13 8.500" /></svg>
        Discover the console
      </Discover>
      <SearchRow aria-label="Filter buckets"><Chevron s={11} w={1.3} /></SearchRow>
      <Summary>
        <Count>1</Count>
        <span>Regions</span>
        <Refresh aria-label="Refresh"><FaSyncAlt size={14} /></Refresh>
      </Summary>
      <BucketTable>
        <thead>
          <tr><th /><th><SortLabel>Date created<Caret $size={5} /></SortLabel></th></tr>
        </thead>
        <tbody>
          <tr><td /><td>Jun 10, 2020 12:09:05 PM<br />GMT+0200</td></tr>
          <tr><td /><td>May 29, 2020 2:46:15 PM<br />GMT+0200</td></tr>
        </tbody>
      </BucketTable>
    </MainBody>
  </Main>
);

const CreateBucket = () => (
  <Overlay>
    <Dialog role="dialog" aria-labelledby="dialog-title">
      <DialogHead>
        <BucketArt width="132" height="118" viewBox="0 0 132 118">
          <path d="M0 0h116L103 76l-7 26-5 16H4L0 105z" fill="#57b5e4" />
          <path d="M0 0h99q3 11-51 11Q6 11 0 5z" fill="#4fa9de" />
          <path d="M113 73q1-9 7-9 10 4 9 18-3 16-19 18-6 0-14-3l6-12 13-2z" fill="#57b5e4" />
          <path d="M97 97Q60 86 24 63 13 52 22 41q9-8 20-1l62 43" fill="none" stroke="#4fa9de" strokeWidth="6.500" />
          <path d="M101 76q8 2 12-4 5 5 4 12-4 7-20 3z" fill="#4fa9de" />
        </BucketArt>
        <TitleRow>
          <DialogTitle id="dialog-title">Create bucket</DialogTitle>
          <Close aria-label="Close">
            <svg width="20" height="20" viewBox="0 0 20 20"><path d="M1 1l18 18M19 1L1 19" stroke="#fff" strokeWidth="2" /></svg>
          </Close>
        </TitleRow>
        <Steps>
          {steps.map((s, i) => (
            <Step key={s.label} $current={s.state === "current"}>
              <Bullet $state={s.state}>
                {s.state === "done" ? (
                  <svg width="13" height="12" viewBox="0 0 13 12"><path d="M2 6l3 3.500L11 2" fill="none" stroke="#3c93c8" strokeWidth="2.200" /></svg>
                ) : (
                  i + 1
                )}
              </Bullet>
              {s.label}
            </Step>
          ))}
        </Steps>
      </DialogHead>
      <Pane>
        <Content>
          <p>
            recommends that you turn on Block all public access, but before applying any of these settings, ensure
            that your applications will work correctly without public access. If you require some level of public access
            to your buckets or objects within, you can customize the individual settings below to suit your specific
            storage use cases.{" "}
            <LearnMore href="#">
              Learn more{" "}
              <svg width="15" height="14" viewBox="0 0 15 14" fill="none" stroke="currentColor" strokeWidth="1.500">
                <path d="M8 2H3Q1 2 1 4v7q0 2 2 2h7q2 0 2-2V8M6 8l6-6" />
                <path d="M9 0h6v6z" fill="currentColor" stroke="none" />
              </svg>
            </LearnMore>
          </p>
          <Alert>
            <AlertIcon><FaExclamationTriangle size={20} /></AlertIcon>
            <div>
              <AlertTitle>Disabling Block all public access may result in this bucket and the objects within becoming public</AlertTitle>
              <p>
                AWS recommends that you block all public access to your bucket, unless public access is required for
                specific and verified use cases such as static website hosting.
              </p>
              <AckRow>
                <CheckLabel htmlFor="ack">
                  <Box type="checkbox" id="ack" defaultChecked />
                  I acknowledge that the current settings may result in this bucket and the objects within becoming public
                </CheckLabel>
              </AckRow>
            </div>
          </Alert>
          <CheckLabel $strong htmlFor="block-all">
            <Box type="checkbox" id="block-all" />
            <span>Block <em>all</em> public access</span>
          </CheckLabel>
          <Note>
            Turning this setting on is the same as turning on all four settings below. Each of the following settings
            are independent of one another.
          </Note>
          <Tree>
            {settings.map((s) => (
              <Branch key={s.id}>
                <CheckLabel $strong htmlFor={s.id}>
                  <Box type="checkbox" id={s.id} />
                  <span>{s.title}</span>
                </CheckLabel>
                <Note>{s.note}</Note>
              </Branch>
            ))}
          </Tree>
        </Content>
        <Track><Thumb /></Track>
      </Pane>
      <DialogFoot>
        <hr />
        <Actions>
          <Action>Previous</Action>
          <Action $primary>Next</Action>
        </Actions>
      </DialogFoot>
    </Dialog>
  </Overlay>
);

export default function App() {
  return (
    <Desktop>
      <Global />
      <DesktopBar />
      <Workspace>
        <Dock>
          {dock.map((d) => (
            <DockItem key={d.name} aria-label={d.name} $active={d.active}>
              {d.icon}
              <Pips>{Array.from({ length: d.pips }, (_, i) => <Pip key={i} />)}</Pips>
            </DockItem>
          ))}
          <AppsButton aria-label="Show applications">
            {Array.from({ length: 9 }, (_, i) => <i key={i} />)}
          </AppsButton>
        </Dock>
        <Browser>
          <Chrome />
          <Page>
            <AwsHeader />
            <Console>
              <SideNav />
              <BucketsPage />
            </Console>
            <Footer>
              <FooterItem><FaComment size={17} />Feedback</FooterItem>
              <FooterItem><FaGlobeAmericas size={16} />English (US)</FooterItem>
              <Legal>
                <span>© 2008 - 2020, Amazon Web Services, Inc. or its affiliates. All rights reserved.</span>
                <a href="#">Privacy Policy</a>
                <a href="#">Terms of Use</a>
              </Legal>
            </Footer>
            <CreateBucket />
          </Page>
        </Browser>
      </Workspace>
    </Desktop>
  );
}
